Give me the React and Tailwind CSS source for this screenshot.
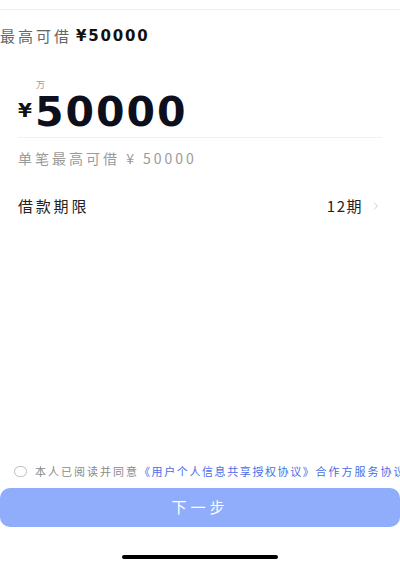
import { ChevronRight } from 'lucide-react';

const CJK = '"Noto Sans CJK SC", "Liberation Sans", sans-serif';
const NUM = '"DejaVu Sans", "Liberation Sans", sans-serif';

export default function App() {
  return (
    <div className="w-[400px] h-[565px] bg-white flex flex-col overflow-hidden" style={{ fontFamily: CJK }}>
      {/* top hairline */}
      <div className="h-[10px] border-b border-[#f0f0f0] shrink-0" />

      {/* summary */}
      <div className="h-[52px] flex items-center whitespace-nowrap">
        <span className="text-[15px] tracking-[3px] text-[#666]">最高可借</span>
        <span className="ml-[4px] text-[15px] font-bold tracking-[1.8px] text-[#111]" style={{ fontFamily: NUM }}>¥50000</span>
      </div>

      {/* amount */}
      <div className="px-[18px] pt-[18px]">
        <div className="pl-[18px] text-[9px] leading-[10px] text-[#999]">万</div>
        <div className="flex items-end h-[42px] mt-[1px]">
          <span className="text-[20px] font-bold leading-none text-[#111] mb-[13px]" style={{ fontFamily: NUM }}>¥</span>
          <span className="ml-[3px] text-[41px] font-bold leading-none tracking-[2px] text-[#0d0f1c]" style={{ fontFamily: NUM }}>50000</span>
        </div>
        <div className="mt-[4px] border-t border-[#f2f2f2]" />
        <div className="h-[40px] flex items-center whitespace-nowrap text-[14px] tracking-[3px] text-[#9a9a9a]">
          单笔最高可借 ¥ 50000
        </div>
      </div>

      {/* term row */}
      <div className="mt-[8px] h-[40px] flex items-center px-[18px]">
        <span className="flex-1 text-[15px] tracking-[2.8px] text-[#222]">借款期限</span>
        <span className="text-[15px] tracking-[1.5px] text-[#222]">12期</span>
        <ChevronRight size={12} strokeWidth={1.5} className="ml-[7px] text-[#bbb]" />
      </div>

      <div className="flex-1" />

      {/* agreement */}
      <div className="h-[24px] flex items-center pl-[14px] whitespace-nowrap overflow-hidden">
        <span className="w-[13px] h-[11px] rounded-full border border-[#bdbdbd] shrink-0" />
        <span className="ml-[8px] text-[11px] tracking-[2px] text-[#8a8a8a]">本人已阅读并同意</span>
        <span className="text-[11px] tracking-[1.6px] text-[#4a6ee8]">《用户个人信息共享授权协议》</span>
        <span className="text-[11px] tracking-[2px] text-[#4a6ee8]">合作方服务协议</span>
      </div>

      {/* button */}
      <div className="mt-[5px] h-[39px] rounded-[10px] bg-[#8fadfb] flex items-center justify-center">
        <span className="text-[15px] tracking-[4px] text-white">下一步</span>
      </div>

      {/* home indicator */}
      <div className="h-[38px] flex justify-center pt-[28px]">
        <div className="w-[156px] h-[4px] rounded-full bg-black" />
      </div>
    </div>
  );
}
